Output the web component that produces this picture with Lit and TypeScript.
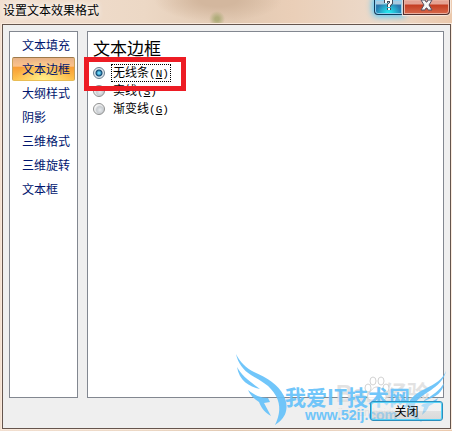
import { LitElement, html, css } from "lit";
import { customElement, state } from "lit/decorators.js";

const SECTIONS = ["文本填充", "文本边框", "大纲样式", "阴影", "三维格式", "三维旋转", "文本框"];
const LINES = [
  { id: "none", label: "无线条", key: "N" },
  { id: "solid", label: "实线", key: "S" },
  { id: "gradient", label: "渐变线", key: "G" },
];

@customElement("site-watermark")
class SiteWatermark extends LitElement {
  static styles = css`
    :host { display: block; width: 212px; height: 76px; pointer-events: none; }
    svg { display: block; width: 100%; height: 100%; }
    .blue { fill: #66c2fa; opacity: 0.92; }
    .name { font: 700 21px "Noto Sans CJK SC", sans-serif; }
    .url { font: bold 14px "Liberation Sans", sans-serif; }
    .ghost { fill: #dedede; opacity: 0.85; }
    .paw { fill: #fff; stroke: #ccc; stroke-width: 1; }
    .brand { font: bold 23px "Liberation Sans", "Noto Sans CJK SC", sans-serif; }
    .small { font: 10px "Liberation Sans", sans-serif; }
  `;
  render() {
    return html`<svg viewBox="0 0 212 76" aria-hidden="true">
      <g class="ghost">
        <text class="brand" x="100" y="48">Bai</text>
        <text class="brand" x="148" y="48">经验</text>
        <text class="small" x="102" y="62">jingyan.baidu.com</text>
        <g class="paw">
          <ellipse cx="132" cy="34" rx="3" ry="4" />
          <ellipse cx="137" cy="27" rx="3" ry="4" />
          <ellipse cx="145" cy="27" rx="3" ry="4" />
          <ellipse cx="150" cy="34" rx="3" ry="4" />
          <path d="M141 33c5 0 6 4 8 7 3 4 0 7-4 6-3-1-5-1-8 0-5 1-7-3-4-7 3-3 4-6 8-6z" />
        </g>
      </g>
      <g class="blue">
        <path d="M0 0C4 8 10 14 18 18C31 24 42 30 48 42C54 55 49 65 39 71C44 61 45 51 40 42C34 31 25 27 15 21C7 16 2 9 0 0z" />
        <path d="M1 13C5 20 10 25 24 35C13 33 3 26 1 13z" />
        <path d="M12 36C18 41 25 44 32 44L34 48L28 49L35 62C27 57 25 53 23 48C18 45 14 41 12 36z" />
        <path d="M210 17C207 25 199 30 189 35C180 39 174 44 172 51C172 59 178 65 186 68C180 62 177 56 179 50C184 39 206 35 210 17z" />
        <path d="M208 29C207 38 201 43 187 47C197 41 204 36 208 29z" />
        <path d="M202 44C198 47 193 49 187 50L185 52L188 53L186 61C191 57 192 54 193 52C198 50 201 47 202 44z" />
        <text class="name" x="49" y="51">我爱IT技术网</text>
        <text class="url" x="69" y="66">www.52ij.com</text>
      </g>
    </svg>`;
  }
}

@customElement("app-root")
class AppRoot extends LitElement {
  @state() section = 1;
  @state() line = "none";

  static styles = css`
    :host {
      display: flex; flex-direction: column; box-sizing: border-box; position: relative;
      width: 100%; height: 100vh; overflow: hidden;
      padding: 0 1px 2px 2px; color: #000;
      font: 12px/18px "Noto Sans CJK SC", sans-serif;
      background:
        radial-gradient(circle at 217px 19px, #b0ad7b 0 2px, transparent 8px),
        radial-gradient(ellipse 64px 22px at 218px 0, #d3b79e 30%, transparent),
        linear-gradient(90deg, #f2dfd0, #ecd8c5 32%, #e2c9b2 52%, #eacfb8 65%, #ecdacb 85%, #ebc8ab);
    }
    * { box-sizing: border-box; }
    .title { display: flex; justify-content: space-between; height: 24px; flex: none; padding: 0 1px; }
    h1 { margin: 0; font-size: 12px; font-weight: 400; line-height: 20px; text-shadow: 0 0 6px #fff, 0 0 6px #fff; }
    .caption { display: flex; height: 15px; }
    .caption button {
      display: flex; justify-content: center; padding: 0; height: 15px;
      border: 1px solid #51302f; border-top: 0;
    }
    .caption .help {
      width: 29px; border-color: #123b5c; border-radius: 0 0 0 4px;
      background: radial-gradient(ellipse at 50% 100%, #25e5ed 10%, transparent 65%), linear-gradient(#a9cae0 0 4px, #2d76ac 5px, #2387b9);
      box-shadow: 0 0 6px 2px #5bcaf7, inset 0 0 0 1px #8fd0ee;
    }
    .caption .close {
      width: 47px; border-radius: 0 0 4px 0;
      background: linear-gradient(#e5a293 0 4px, #c43d22 5px, #d8694b);
      box-shadow: inset 0 0 0 1px #eab0a0, 0 0 1px 1px #f8eae0;
    }
    .caption svg { display: block; width: 13px; height: 12px; }
    .body {
      flex: 1; min-height: 0; display: flex; flex-direction: column;
      padding: 6px 6px 7px; border: 1px solid #65554d; outline: 1px solid #faeadd; background: #efefef;
    }
    .panes { flex: 1; min-height: 0; display: flex; gap: 9px; }
    nav, main { border: 1px solid #828790; background: #fff; }
    nav { width: 69px; padding: 1px 2px; flex: none; }
    nav button {
      display: block; width: 100%; height: 24px; padding: 0 0 0 9px; border: 1px solid transparent;
      background: none; color: #00156e; font: inherit; line-height: 22px; text-align: left; white-space: nowrap;
    }
    nav button.active {
      border-color: #9d794a #c9a35d #e9bd55; border-radius: 2px;
      background: radial-gradient(ellipse at 50% 100%, #fff08a, transparent 65%), linear-gradient(#e8b286, #fbc38d 38%, #f79c35 40%, #ffc34e);
    }
    main { flex: 1; padding: 3px 5px; }
    h2 { margin: 0 0 4px; font-size: 17px; font-weight: 400; line-height: 25px; }
    .option { display: flex; align-items: center; gap: 6px; height: 18px; width: max-content; }
    .option input {
      appearance: none; width: 12px; height: 12px; margin: 0; border: 1px solid #8e8f8f; border-radius: 50%;
      background: radial-gradient(circle at 60% 60%, #e8ebee 0, #c8ccd0 40%, #f4f4f4 62%);
    }
    .option input:checked { border-color: #6b7f8f; background: radial-gradient(circle, #65d3f7 0 1px, #0c4470 3px, #dbe5ec 4px); }
    .label { padding: 0 1px; line-height: 14px; border: 1px solid transparent; }
    .option input:checked + .label { border: 1px dotted #000; }
    .key { font-family: "Liberation Mono", monospace; font-size: 11px; }
    footer { display: flex; justify-content: flex-end; padding: 3px 1px 0 0; position: relative; z-index: 1; }
    .ok {
      width: 73px; height: 20px; padding: 0; border: 1px solid #2c8fbd; border-radius: 3px; color: #000;
      background: linear-gradient(#f4f4f480 50%, #d4d4d480 50%, #c4c4c480); box-shadow: inset 0 0 0 1px #56d3f8;
      font: inherit; line-height: 18px;
    }
    .highlight { position: absolute; left: 84px; top: 57px; width: 102px; height: 34px; border: 5px solid #ed1c24; pointer-events: none; }
    site-watermark { position: absolute; right: 4px; bottom: 1px; }
  `;

  render() {
    return html`
      <header class="title">
        <h1>设置文本效果格式</h1>
        <div class="caption">
          <button class="help" aria-label="帮助"><svg viewBox="0 0 13 12"><path d="M4 3V0h5v3L7 5v2M7 8v2" fill="none" stroke="#454b59" stroke-width="4"/><path d="M4 3V0h5v3L7 5v2M7 8v2" fill="none" stroke="#fff" stroke-width="2"/></svg></button>
          <button class="close" aria-label="关闭窗口"><svg viewBox="0 0 13 12"><path d="M1 0h4l1 2h1l1-2h4L9 5l3 5H8L7 8H6l-1 2H1l3-5z" fill="#f5f5f5" stroke="#555061"/></svg></button>
        </div>
      </header>
      <div class="body">
        <div class="panes">
          <nav>${SECTIONS.map((name, i) => html`<button class=${i === this.section ? "active" : ""} @click=${() => (this.section = i)}>${name}</button>`)}</nav>
          <main>
            <h2>${SECTIONS[this.section]}</h2>
            ${LINES.map((l) => html`<label class="option">
              <input type="radio" name="line" .checked=${l.id === this.line} @change=${() => (this.line = l.id)} />
              <span class="label">${l.label}<span class="key">(<u>${l.key}</u>)</span></span>
            </label>`)}
          </main>
        </div>
        <footer><button class="ok">关闭</button></footer>
      </div>
      <div class="highlight"></div>
      <site-watermark></site-watermark>
    `;
  }
}
